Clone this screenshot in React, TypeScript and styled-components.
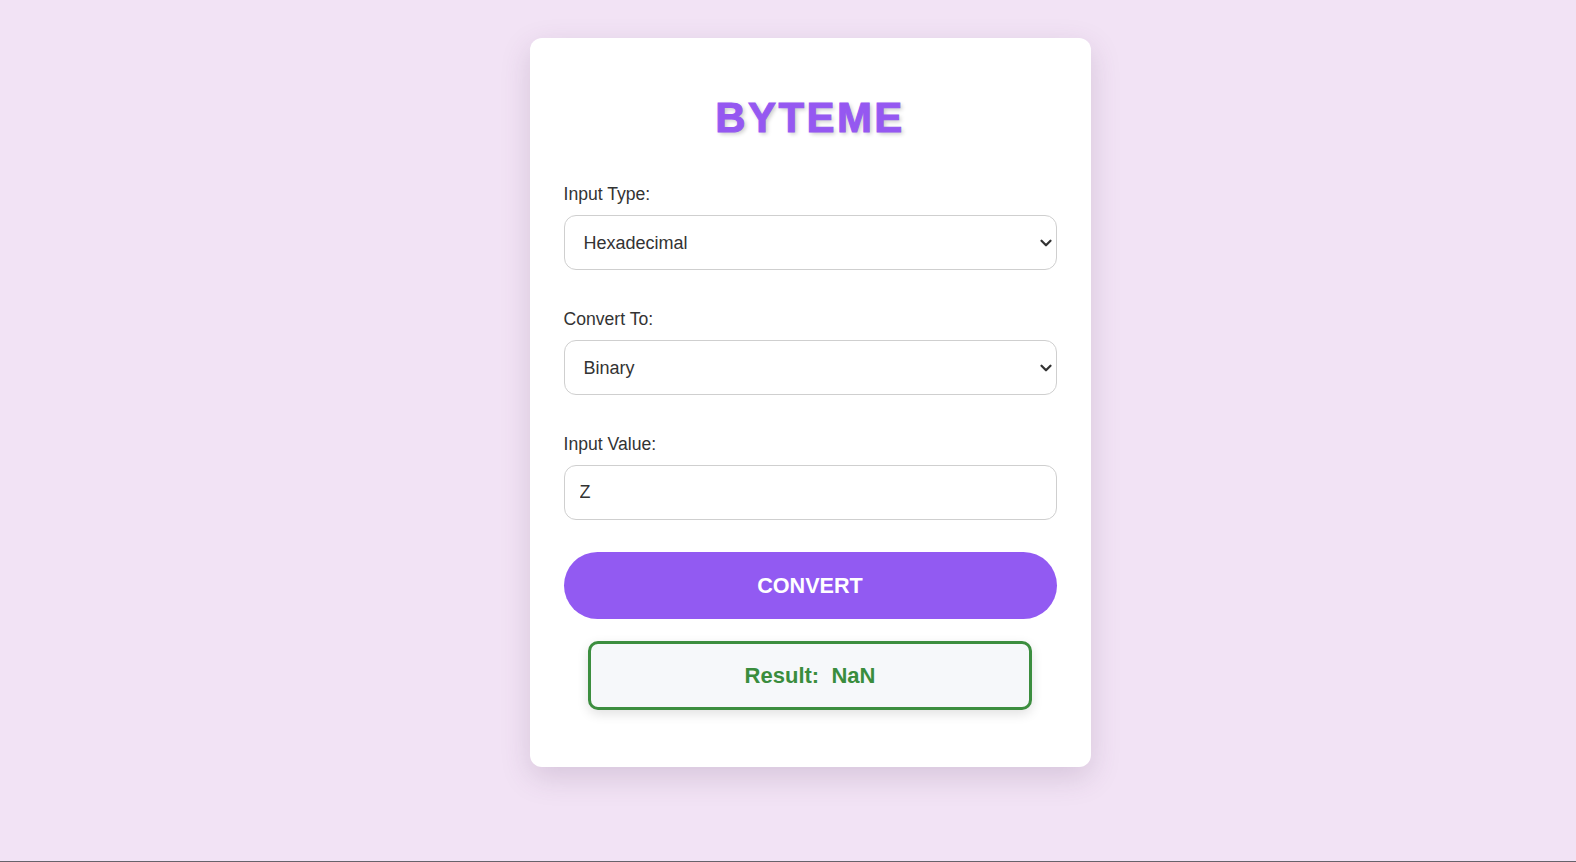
import { useState } from "react";
import styled, { createGlobalStyle } from "styled-components";
import { ChevronDown } from "lucide-react";

const GlobalStyle = createGlobalStyle`
  * {
    box-sizing: border-box;
  }
  body {
    margin: 0;
    font-family: "Liberation Sans", Arial, sans-serif;
    background: #f2e3f5;
  }
`;

const Page = styled.div`
  height: 100vh;
  display: flex;
  justify-content: center;
  align-items: flex-start;
  padding: 38px 0 0 44px;
  background: #f2e3f5;
  border-bottom: 1px solid #67626b;
`;

const Card = styled.div`
  width: 561px;
  padding: 56px 34px 57px;
  background: #fff;
  border-radius: 12px;
  box-shadow: 0 10px 30px rgba(90, 60, 100, 0.18);
`;

const Title = styled.h1`
  margin: 0 0 42px;
  text-align: center;
  font-size: 42px;
  line-height: 48px;
  font-weight: 900;
  letter-spacing: 2.4px;
  color: #9558f1;
  -webkit-text-stroke: 1px #9558f1;
  text-shadow: 2px 2px 4px rgba(0, 0, 0, 0.22);
`;

const Field = styled.div<{ $gap: number }>`
  margin-bottom: ${(p) => p.$gap}px;
`;

const Label = styled.label`
  display: block;
  margin-bottom: 11px;
  font-size: 17.6px;
  line-height: 20px;
  color: #333;
`;

const SelectWrap = styled.div`
  position: relative;
`;

const Select = styled.select`
  appearance: none;
  width: 100%;
  height: 55px;
  padding: 0 40px 0 19px;
  font-family: inherit;
  font-size: 18px;
  color: #333;
  background: #fff;
  border: 1px solid #cfcfcf;
  border-radius: 12px;
  outline: none;
`;

const Arrow = styled(ChevronDown)`
  position: absolute;
  right: 2px;
  top: 50%;
  transform: translateY(-50%);
  color: #333;
  pointer-events: none;
`;

const TextInput = styled.input`
  width: 100%;
  height: 55px;
  padding: 0 15px;
  font-family: inherit;
  font-size: 18px;
  color: #333;
  background: #fff;
  border: 1px solid #cfcfcf;
  border-radius: 12px;
  outline: none;
`;

const ConvertButton = styled.button`
  display: block;
  width: 100%;
  height: 67px;
  border: none;
  border-radius: 34px;
  background: #925af2;
  color: #fff;
  font-family: inherit;
  font-size: 21.6px;
  font-weight: 700;
  text-transform: uppercase;
  cursor: pointer;
`;

const Result = styled.div`
  width: 90%;
  height: 69px;
  margin: 22px auto 0;
  display: flex;
  align-items: center;
  justify-content: center;
  background: #f6f8fa;
  border: 3px solid #3c8e3f;
  border-radius: 10px;
  box-shadow: 0 4px 12px rgba(0, 0, 0, 0.12);
  color: #3a8d3d;
  font-size: 22px;
  font-weight: 700;
  white-space: pre;
`;

const types = ["Binary", "Decimal", "Hexadecimal", "Octal"];

export default function App() {
  const [from, setFrom] = useState("Hexadecimal");
  const [to, setTo] = useState("Binary");
  const [value, setValue] = useState("Z");

  return (
    <>
      <GlobalStyle />
      <Page>
        <Card>
          <Title>BYTEME</Title>
          <Field $gap={39}>
            <Label>Input Type:</Label>
            <SelectWrap>
              <Select value={from} onChange={(e) => setFrom(e.target.value)}>
                {types.map((t) => (
                  <option key={t}>{t}</option>
                ))}
              </Select>
              <Arrow size={18} strokeWidth={3} />
            </SelectWrap>
          </Field>
          <Field $gap={39}>
            <Label>Convert To:</Label>
            <SelectWrap>
              <Select value={to} onChange={(e) => setTo(e.target.value)}>
                {types.map((t) => (
                  <option key={t}>{t}</option>
                ))}
              </Select>
              <Arrow size={18} strokeWidth={3} />
            </SelectWrap>
          </Field>
          <Field $gap={32}>
            <Label>Input Value:</Label>
            <TextInput value={value} onChange={(e) => setValue(e.target.value)} />
          </Field>
          <ConvertButton>Convert</ConvertButton>
          <Result>{"Result:  NaN"}</Result>
        </Card>
      </Page>
    </>
  );
}
